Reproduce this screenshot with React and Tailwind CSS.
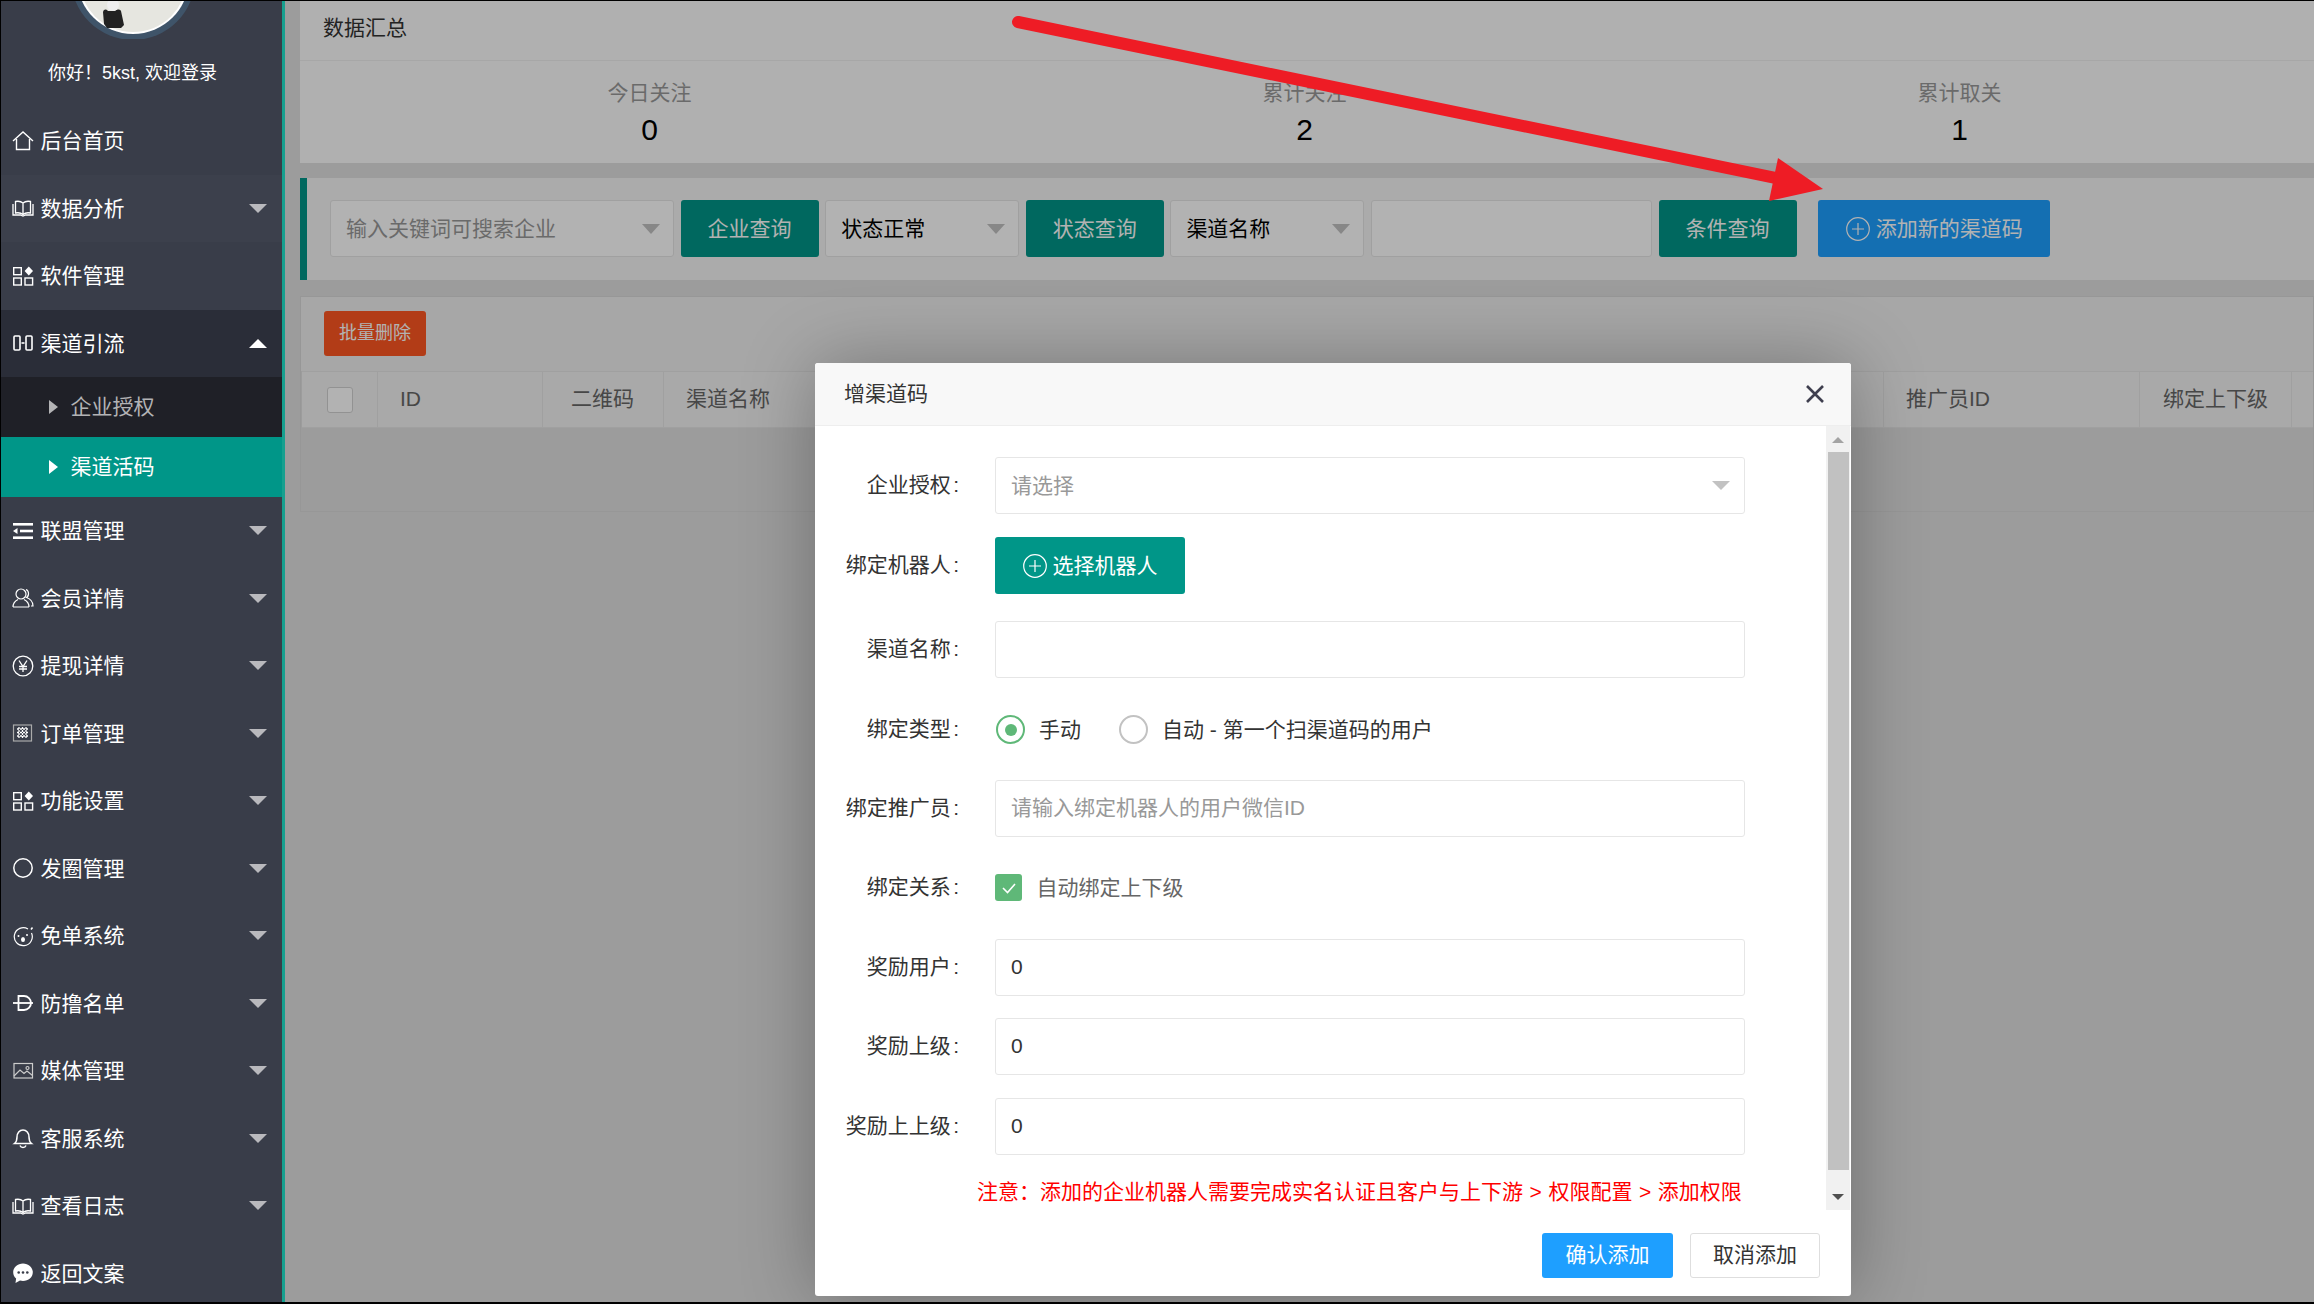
import React from 'react';

const HomeIcon = () => (
  <svg width="22" height="22" viewBox="0 0 22 22" fill="none" stroke="#fff" strokeWidth="1.4">
    <path d="M1 11 11 2l10 9" />
    <path d="M4.500 9v10.500h13V9" />
  </svg>
);
const BookIcon = () => (
  <svg width="22" height="22" viewBox="0 0 22 22" fill="none" stroke="#fff" strokeWidth="1.3">
    <path d="M11 6C9 4.300 6 4 3.500 4.500V16c2.500-.5 5.500-.2 7.500 1.500C13 15.800 16 15.500 18.500 16V4.500C16 4 13 4.300 11 6zM11 6v11.500" />
    <path d="M1 7v11h7.500l2.500 1 2.500-1H21V7" />
  </svg>
);
const AppIcon = () => (
  <svg width="22" height="22" viewBox="0 0 22 22" fill="none" stroke="#fff" strokeWidth="1.4">
    <rect x="1.700" y="2.700" width="7.600" height="7" />
    <rect x="1.700" y="13" width="7.600" height="7" />
    <rect x="13" y="13" width="7.600" height="7" />
    <path d="M16.800 1.500 21 6l-4.200 4.500L12.600 6z" fill="#fff" stroke="none" />
  </svg>
);
const ChannelIcon = () => (
  <svg width="22" height="22" viewBox="0 0 22 22" fill="none" stroke="#fff" strokeWidth="1.6">
    <rect x="2" y="4" width="6" height="14" rx="1" />
    <rect x="14" y="4" width="6" height="14" rx="1" />
    <path d="M9.500 11h3" />
  </svg>
);
const IndentIcon = () => (
  <svg width="22" height="22" viewBox="0 0 22 22" fill="#fff">
    <rect x="1" y="3" width="20" height="2.600" />
    <rect x="8" y="9.700" width="13" height="2.600" />
    <rect x="1" y="16.400" width="20" height="2.600" />
    <path d="M1 11l4.500-3v6z" />
  </svg>
);
const UserIcon = () => (
  <svg width="22" height="22" viewBox="0 0 22 22" fill="none" stroke="#fff" strokeWidth="1.2">
    <circle cx="9" cy="7" r="5" />
    <path d="M1 20c0-4.500 3-6.500 5-7.500M17 20c0-4.500-3-6.500-5-7.500M1 20h16" />
    <path d="M14 2.500c3 1 3.500 6.500.5 8 3 1 6.500 4 6.500 8.500h-2" />
  </svg>
);
const RmbIcon = () => (
  <svg width="22" height="22" viewBox="0 0 22 22" fill="none" stroke="#fff" strokeWidth="1.300">
    <circle cx="11" cy="11" r="9.800" />
    <path d="M7 5.500l4 6 4-6M11 11.500V17M7 11.500h8M7 14h8" />
  </svg>
);
const TableIcon = () => (
  <svg width="22" height="22" viewBox="0 0 22 22" fill="none">
    <rect x="1.500" y="3" width="18" height="16" stroke="#aaa" strokeWidth="1.200" />
    <path d="M5 7h11M5 10.500h11M5 14h11M7 5v11M10.500 5v11M14 5v11" stroke="#fff" strokeWidth="1.300" strokeDasharray="2 1" />
  </svg>
);
const CircleIcon = () => (
  <svg width="22" height="22" viewBox="0 0 22 22" fill="none" stroke="#fff" strokeWidth="1.500">
    <circle cx="11" cy="11" r="9.200" />
  </svg>
);
const FaceIcon = () => (
  <svg width="22" height="22" viewBox="0 0 22 22" fill="none" stroke="#fff" strokeWidth="1.200">
    <path d="M16 4a9 9 0 1 0 3.500 4" />
    <circle cx="6.500" cy="11" r="1" fill="#fff" stroke="none" />
    <circle cx="15" cy="10" r="1" fill="#fff" stroke="none" />
    <ellipse cx="11" cy="14.500" rx="2" ry="2.500" fill="#fff" stroke="none" />
    <path d="M19 4.500l1.500-2" strokeWidth="1.500" />
  </svg>
);
const BanIcon = () => (
  <svg width="22" height="22" viewBox="0 0 22 22" fill="none" stroke="#fff" strokeWidth="1.800">
    <path d="M1 11h20" />
    <path d="M6.500 4H12a7 7 0 0 1 0 14H6.500z" />
  </svg>
);
const PictureIcon = () => (
  <svg width="22" height="22" viewBox="0 0 22 22" fill="none" stroke="#ccc" strokeWidth="1.200">
    <rect x="2" y="3.500" width="18.500" height="14.500" />
    <path d="M2 16l6-6 4 3.500 3-2.500 5.500 4.500" />
    <circle cx="15.500" cy="8" r="1.500" />
  </svg>
);
const BellIcon = () => (
  <svg width="22" height="22" viewBox="0 0 22 22" fill="none" stroke="#fff" strokeWidth="1.500">
    <path d="M2.500 16.500h17c-2-1.500-2.500-3-2.500-6.500 0-4-2.500-7-6-7s-6 3-6 7c0 3.500-.5 5-2.500 6.500z" />
    <path d="M8 18.500c.5 1.300 1.500 2 3 2s2.500-.7 3-2" />
  </svg>
);
const ChatIcon = () => (
  <svg width="22" height="22" viewBox="0 0 22 22">
    <path d="M11 1.500c5.500 0 9.800 3.800 9.800 8.800S16.500 19 11 19c-1 0-2-.1-3-.4L3.500 21l.6-4.500C2.200 15 1.200 12.800 1.200 10.300 1.200 5.300 5.500 1.500 11 1.500z" fill="#fff" />
    <circle cx="6.700" cy="10.500" r="1.300" fill="#393d49" />
    <circle cx="11" cy="10.500" r="1.300" fill="#393d49" />
    <circle cx="15.300" cy="10.500" r="1.300" fill="#393d49" />
  </svg>
);
const PlusIcon = ({ color }) => (
  <svg width="24" height="24" viewBox="0 0 24 24" fill="none" stroke={color} strokeWidth="1.200" className="shrink-0">
    <circle cx="12" cy="12" r="11.300" />
    <path d="M12 6v12M6 12h12" />
  </svg>
);

const Down = () => <span className="h-0 w-0 border-x-[9px] border-t-[9px] border-x-transparent border-t-[#b9b9bd]" />;

const menuTop = [
  { label: '后台首页', icon: <HomeIcon /> },
  { label: '数据分析', icon: <BookIcon />, arrow: true, hover: true },
  { label: '软件管理', icon: <AppIcon /> },
];
const menuBottom = [
  { label: '联盟管理', icon: <IndentIcon />, arrow: true },
  { label: '会员详情', icon: <UserIcon />, arrow: true },
  { label: '提现详情', icon: <RmbIcon />, arrow: true },
  { label: '订单管理', icon: <TableIcon />, arrow: true },
  { label: '功能设置', icon: <AppIcon />, arrow: true },
  { label: '发圈管理', icon: <CircleIcon />, arrow: true },
  { label: '免单系统', icon: <FaceIcon />, arrow: true },
  { label: '防撸名单', icon: <BanIcon />, arrow: true },
  { label: '媒体管理', icon: <PictureIcon />, arrow: true },
  { label: '客服系统', icon: <BellIcon />, arrow: true },
  { label: '查看日志', icon: <BookIcon />, arrow: true },
  { label: '返回文案', icon: <ChatIcon /> },
];

function MenuRow({ item }) {
  return (
    <div className={`flex h-[67.5px] items-center pl-[11px] pr-[15px] text-white ${item.hover ? 'bg-[#3c404c]' : ''}`}>
      <span className="flex w-[28.5px] shrink-0">{item.icon}</span>
      <span className="flex-1">{item.label}</span>
      {item.arrow && <Down />}
    </div>
  );
}

function SubRow({ label, active }) {
  return (
    <div className={`flex h-[60px] items-center pl-[48px] ${active ? 'bg-[#009688] text-white' : 'bg-[#1f2027] text-[#b3b3b5]'}`}>
      <span className={`mr-[12.5px] h-0 w-0 border-y-[7px] border-l-[9px] border-y-transparent ${active ? 'border-l-white' : 'border-l-[#b3b3b5]'}`} />
      {label}
    </div>
  );
}

function Sidebar() {
  return (
    <div className="w-[284px] shrink-0 border-r-[3px] border-[#16a08f] bg-[#393d49] text-[21px]">
      <div className="flex h-[106px] flex-col items-center pr-[18px]">
        <svg width="124" height="38" viewBox="0 85 124 38" className="shrink-0">
          <circle cx="62" cy="62" r="62" fill="#3f5469" />
          <circle cx="62" cy="62" r="56" fill="#fff" />
          <circle cx="62" cy="62" r="54" fill="#e6e6e0" />
          <path d="M32 96c1-3 3-3 5-1h7c2-2 5-2 6 0l3 14-3 3H36l-3-4z" fill="#222" />
          <circle cx="42" cy="89" r="6" fill="#eee" />
        </svg>
        <div className="mt-[22px] text-[18px] leading-[24px] text-white">你好！5kst, 欢迎登录</div>
      </div>
      {menuTop.map((m) => <MenuRow key={m.label} item={m} />)}
      <div className="flex h-[67.5px] items-center bg-[#2a2d38] pl-[11px] pr-[15px] text-white">
        <span className="flex w-[28.5px] shrink-0"><ChannelIcon /></span>
        <span className="flex-1">渠道引流</span>
        <span className="h-0 w-0 border-x-[9px] border-b-[9px] border-x-transparent border-b-white" />
      </div>
      <SubRow label="企业授权" />
      <SubRow label="渠道活码" active />
      {menuBottom.map((m) => <MenuRow key={m.label} item={m} />)}
    </div>
  );
}

const Stat = ({ label, value }) => (
  <div className="flex flex-col items-center">
    <div className="text-[21px] leading-[32px] text-[#999]">{label}</div>
    <div className="mt-[2px] text-[30px] leading-[38px] text-black">{value}</div>
  </div>
);

const SearchSelect = ({ text, width, dark }) => (
  <div className={`flex h-[57px] items-center justify-between rounded-[3px] border border-[#e6e6e6] bg-white pl-[15px] pr-[13px] text-[21px] ${width} ${dark ? 'text-black' : 'text-[#999]'}`}>
    {text}
    <span className="h-0 w-0 border-x-[9px] border-t-[10px] border-x-transparent border-t-[#c2c2c2]" />
  </div>
);

const TealButton = ({ children }) => (
  <button className="h-[57px] w-[138px] rounded-[3px] bg-[#009688] text-[21px] text-white">{children}</button>
);

const headCols = [
  { text: 'ID', cls: 'w-[165px] pl-[22px]' },
  { text: '二维码', cls: 'w-[121px] pl-[28px]' },
  { text: '渠道名称', cls: 'w-[1220px] pl-[22px]' },
  { text: '推广员ID', cls: 'w-[256px] pl-[22px]' },
  { text: '绑定上下级', cls: 'w-[152px] pl-[23px] whitespace-nowrap' },
];

function Content() {
  return (
    <div className="pl-[15px]">
      <div className="h-[162px] bg-[#fcfcfc]">
        <div className="flex h-[60px] items-center border-b border-[#f0f0f0] pb-[5px] pl-[23px] text-[21px] text-[#333]">数据汇总</div>
        <div className="grid w-[1987px] grid-cols-3 pl-[22px] pt-[16px]">
          <Stat label="今日关注" value="0" />
          <Stat label="累计关注" value="2" />
          <Stat label="累计取关" value="1" />
        </div>
      </div>

      <div className="mt-[15px] flex h-[102px] items-start gap-[6.6px] border-l-[7px] border-[#009688] bg-[#f5f5f5] pl-[23px] pt-[22px]">
        <SearchSelect text="输入关键词可搜索企业" width="w-[344px]" />
        <TealButton>企业查询</TealButton>
        <SearchSelect text="状态正常" width="w-[194px]" dark />
        <TealButton>状态查询</TealButton>
        <SearchSelect text="渠道名称" width="w-[194px]" dark />
        <div className="h-[57px] w-[281px] rounded-[3px] border border-[#e6e6e6] bg-white" />
        <TealButton>条件查询</TealButton>
        <button className="ml-[15px] flex h-[57px] w-[232px] items-center justify-center gap-[6px] rounded-[3px] bg-[#1e9fff] text-[21px] text-white">
          <PlusIcon color="#fff" />
          添加新的渠道码
        </button>
      </div>

      <div className="mt-[16px] h-[216px] border border-[#d8d8d8]">
        <div className="h-[74px] bg-[#f0f0f0] pl-[23px] pt-[14px]">
          <button className="h-[45px] w-[102px] rounded-[3px] bg-[#ff5722] text-[18px] text-white">批量删除</button>
        </div>
        <div className="ml-[1px] flex h-[57px] items-center border-y border-[#e6e6e6] bg-[#f2f2f2] text-[21px] text-[#666]">
          <div className="flex h-full w-[76px] shrink-0 items-center justify-center border-r border-[#e6e6e6]">
            <span className="h-[26px] w-[26px] rounded-[3px] border border-[#d2d2d2] bg-white" />
          </div>
          {headCols.map((c) => (
            <div key={c.text} className={`flex h-full shrink-0 items-center border-r border-[#e6e6e6] pb-[2px] ${c.cls}`}>{c.text}</div>
          ))}
        </div>
      </div>
    </div>
  );
}

const inputCls = 'h-[57px] w-[750px] rounded-[3px] border border-[#e6e6e6] bg-white px-[15px] pb-[2px] text-[21px] text-[#333] outline-none placeholder:text-[#999]';

function Row({ label, mt, children }) {
  return (
    <div className={`flex h-[57px] items-center ${mt}`}>
      <div className="mr-[36px] w-[144px] shrink-0 pb-[1px] text-right text-[#333]">{label}<span className="ml-[2.5px]">:</span></div>
      {children}
    </div>
  );
}

function Modal() {
  return (
    <div className="absolute left-[530px] top-[362px] flex h-[933px] w-[1036px] flex-col overflow-hidden rounded-[3px] bg-white text-[21px] shadow-[1px_1px_75px_rgba(0,0,0,0.3)]">
      <div className="flex h-[63px] shrink-0 items-center justify-between border-b border-[#eee] bg-[#f8f8f8] pl-[29px] pr-[26px] text-[#333]">
        增渠道码
        <svg width="20" height="20" viewBox="0 0 20 20" fill="none" stroke="#3f3f4f" strokeWidth="2.600">
          <path d="M2 2l16 16M18 2 2 18" />
        </svg>
      </div>

      <div className="flex h-[784px] shrink-0">
        <div className="flex-1 pt-[31px]">
          <Row label="企业授权">
            <div className="flex h-[57px] w-[750px] items-center justify-between rounded-[3px] border border-[#e6e6e6] pl-[15px] pr-[14px] text-[#999]">
              请选择
              <span className="h-0 w-0 border-x-[9px] border-t-[9px] border-x-transparent border-t-[#c2c2c2]" />
            </div>
          </Row>
          <Row label="绑定机器人" mt="mt-[23px]">
            <button className="flex h-[57px] w-[190px] items-center justify-center gap-[6px] rounded-[3px] bg-[#009688] text-white">
              <PlusIcon color="#fff" />
              选择机器人
            </button>
          </Row>
          <Row label="渠道名称" mt="mt-[27px]">
            <input className={inputCls} readOnly />
          </Row>
          <Row label="绑定类型" mt="mt-[23px]">
            <span className="ml-[1px] flex h-[29px] w-[29px] items-center justify-center rounded-full border-2 border-[#5fb878]">
              <span className="h-[12px] w-[12px] rounded-full bg-[#5fb878]" />
            </span>
            <span className="ml-[14px] text-[#333]">手动</span>
            <span className="ml-[38px] h-[29px] w-[29px] rounded-full border-2 border-[#c2c2c2]" />
            <span className="ml-[14px] text-[#333]">自动 - 第一个扫渠道码的用户</span>
          </Row>
          <Row label="绑定推广员" mt="mt-[22px]">
            <input className={inputCls} readOnly placeholder="请输入绑定机器人的用户微信ID" />
          </Row>
          <Row label="绑定关系" mt="mt-[22px]">
            <span className="flex h-[27px] w-[27px] items-center justify-center rounded-[3px] bg-[#5fb878]">
              <svg width="18" height="18" viewBox="0 0 18 18" fill="none" stroke="#fff" strokeWidth="1.600">
                <path d="M3 9l4.500 4.500L15 5" />
              </svg>
            </span>
            <span className="ml-[14.5px] text-[#666]">自动绑定上下级</span>
          </Row>
          <Row label="奖励用户" mt="mt-[23px]">
            <input className={inputCls} readOnly value="0" />
          </Row>
          <Row label="奖励上级" mt="mt-[22px]">
            <input className={inputCls} readOnly value="0" />
          </Row>
          <Row label="奖励上上级" mt="mt-[23px]">
            <input className={inputCls} readOnly value="0" />
          </Row>
          <div className="ml-[162px] mt-[22px] whitespace-nowrap leading-[30px] text-[#f00] [word-spacing:0.75px]">注意：添加的企业机器人需要完成实名认证且客户与上下游 &gt; 权限配置 &gt; 添加权限</div>
        </div>
        <div className="mr-[1px] flex w-[24px] shrink-0 flex-col items-center bg-[#f1f1f1]">
          <span className="mt-[11px] h-0 w-0 border-x-[6px] border-b-[6px] border-x-transparent border-b-[#a3a3a3]" />
          <span className="mt-[9px] h-[718px] w-[21px] bg-[#c1c1c1]" />
          <span className="mt-[24px] h-0 w-0 border-x-[6px] border-t-[6px] border-x-transparent border-t-[#505050]" />
        </div>
      </div>

      <div className="flex flex-1 justify-end gap-[17px] pr-[31px] pt-[23px]">
        <button className="h-[45px] w-[131px] rounded-[3px] bg-[#1e9fff] pb-[2px] text-white">确认添加</button>
        <button className="h-[45px] w-[130px] rounded-[3px] border border-[#dedede] bg-white pb-[2px] text-[#333]">取消添加</button>
      </div>
    </div>
  );
}

export default function App() {
  return (
    <div className="flex h-[1304px] w-[2314px] overflow-hidden border-b-2 border-l border-t border-black font-['Liberation_Sans','Noto_Sans_CJK_SC',sans-serif]">
      <Sidebar />
      <div className="relative min-w-0 flex-1 overflow-hidden bg-[#e0e0e0]">
        <Content />
        <div className="absolute inset-0 bg-black/30" />
        <svg className="absolute left-0 top-0" width="2029" height="1301" viewBox="285 1 2029 1301">
          <path d="M1018 22 1785 180" stroke="#ee1c25" strokeWidth="12" strokeLinecap="round" />
          <path d="M1778 158 1823 189 1769 201z" fill="#ee1c25" />
        </svg>
        <Modal />
      </div>
    </div>
  );
}
